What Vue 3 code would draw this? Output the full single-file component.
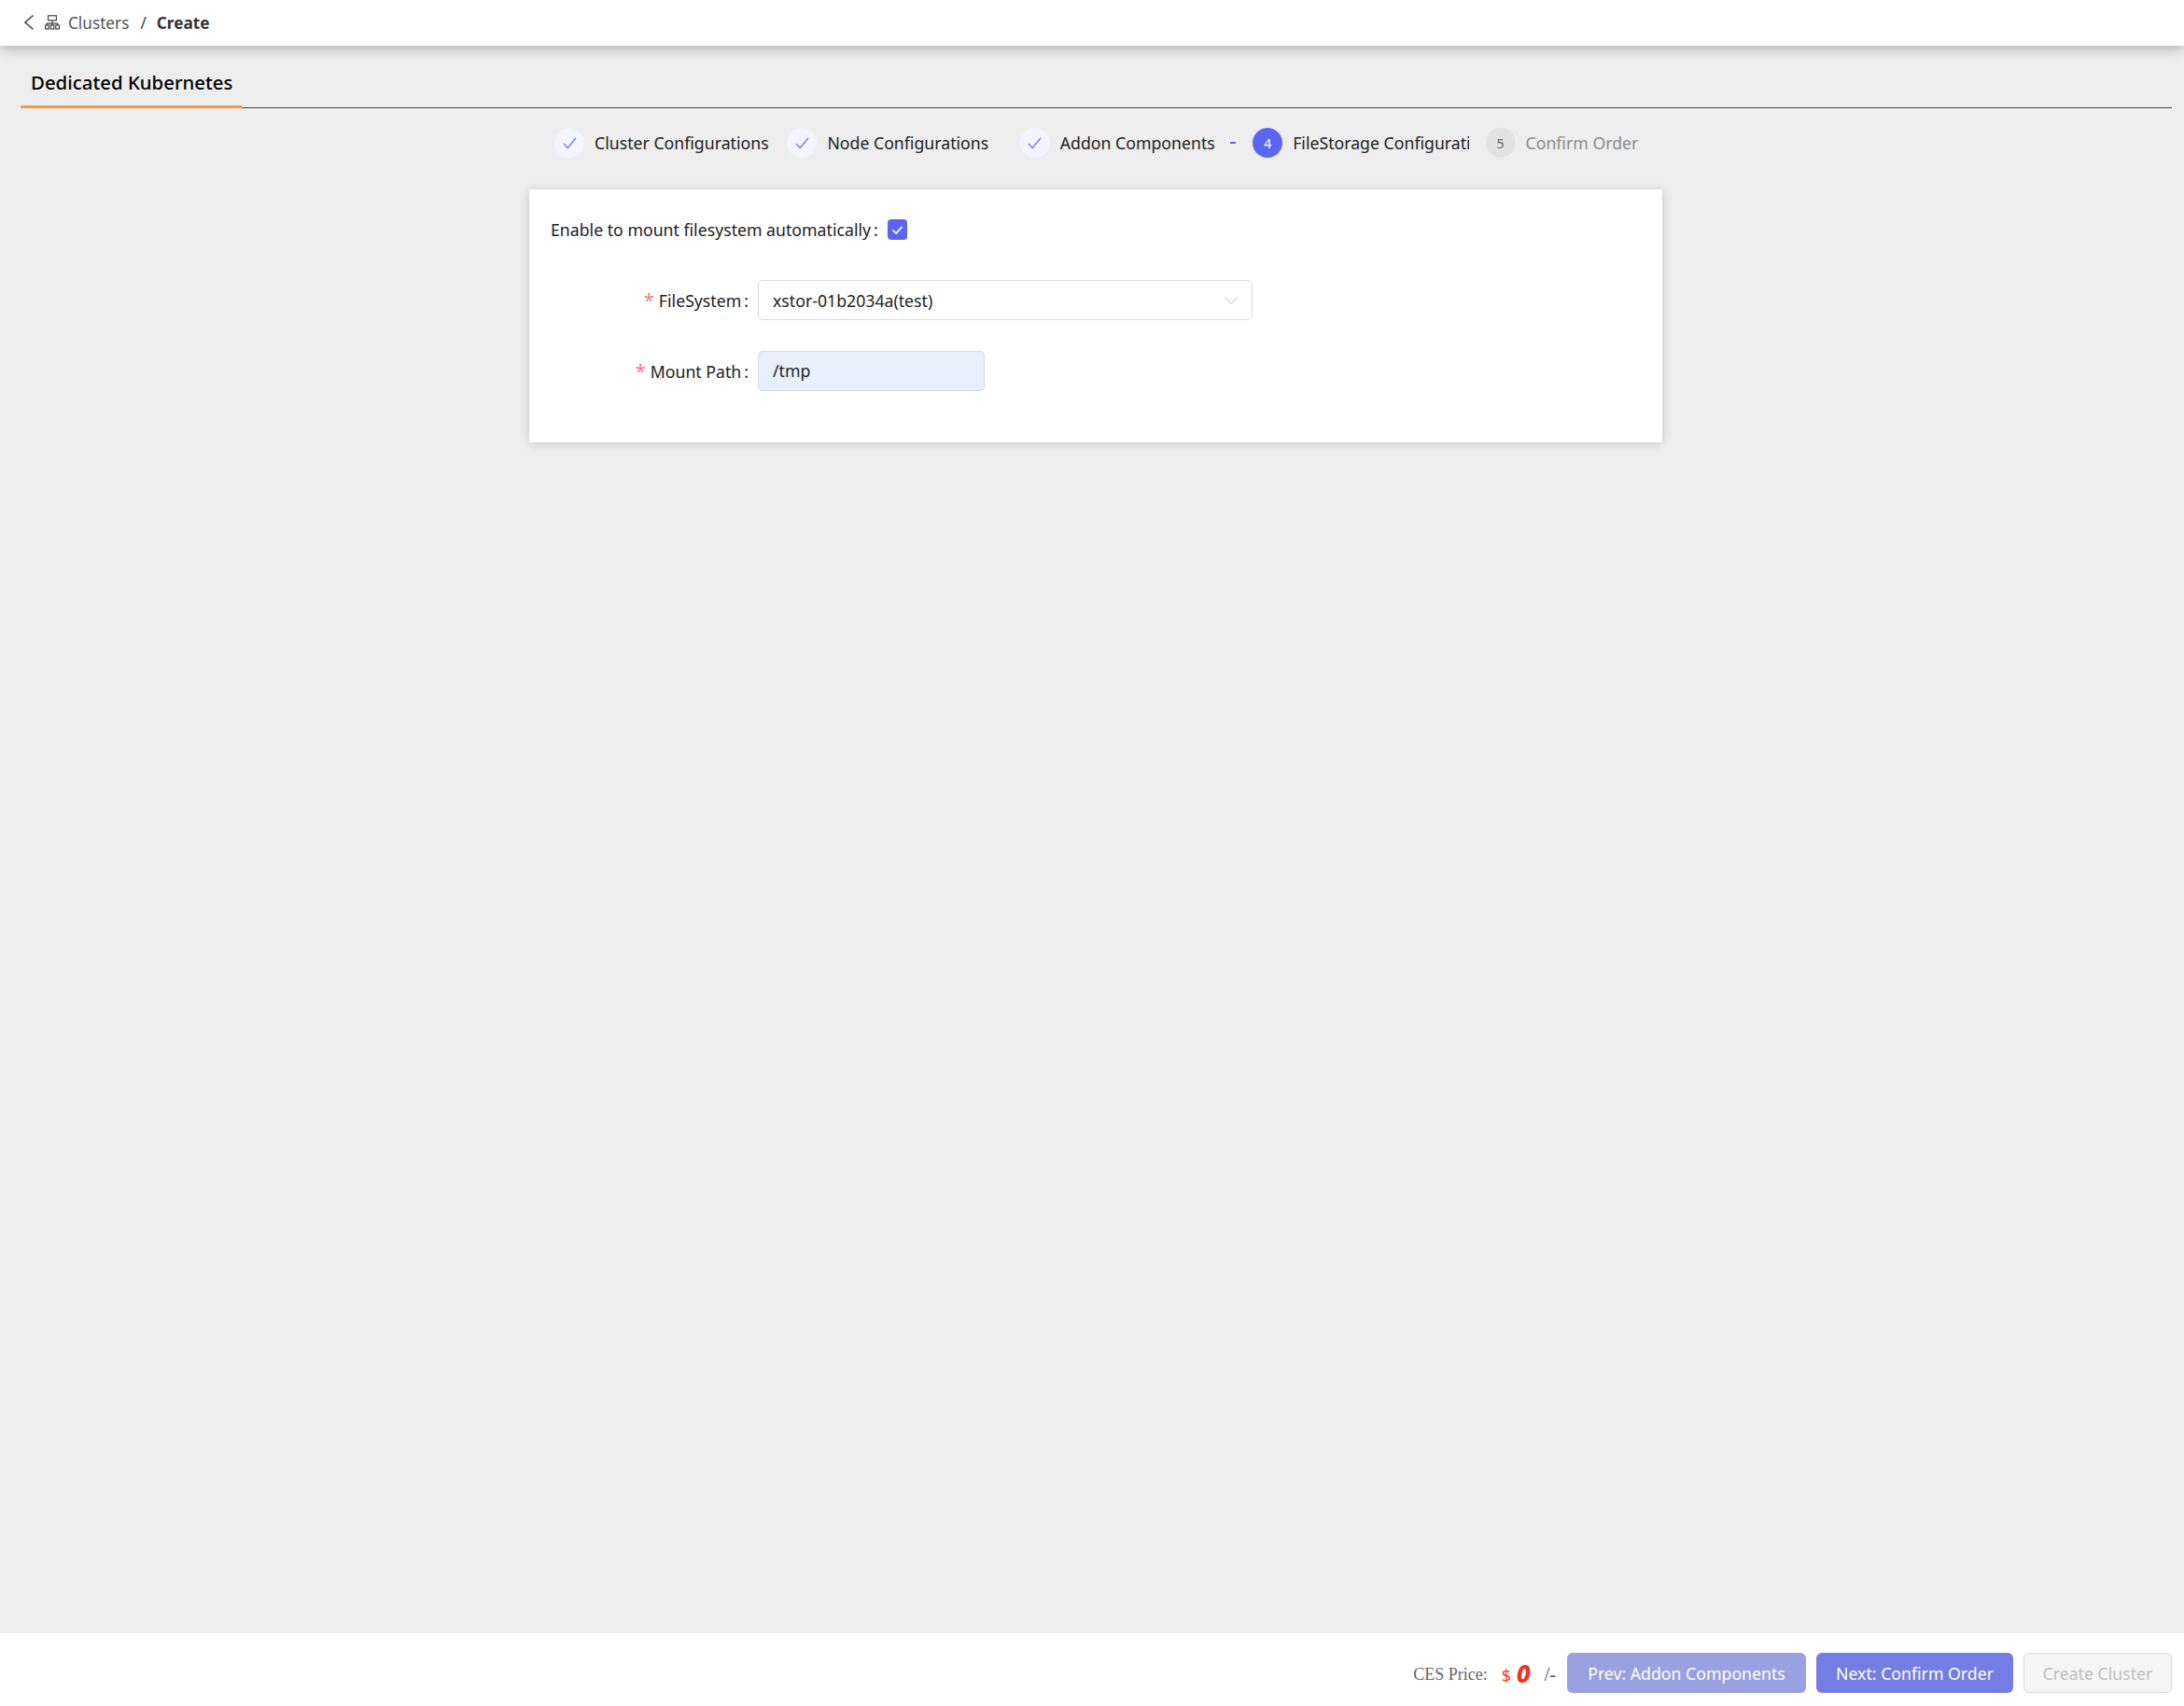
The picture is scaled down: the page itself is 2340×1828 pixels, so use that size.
<template>
  <div class="page">
    <header class="topbar">
      <svg class="back" viewBox="0 0 12 18" width="12" height="18">
        <path d="M10.5 1.5 2 9l8.5 7.5" fill="none" stroke="#444" stroke-width="1.6" />
      </svg>
      <svg class="cluster-icon" viewBox="0 0 16 16" width="16" height="16">
        <g fill="none" stroke="#444" stroke-width="1.2">
          <rect x="3.6" y="0.8" width="8.8" height="5" />
          <path d="M8 5.800v3.400M2.200 11V9.200h11.600V11M8 9.200V11" />
          <rect x="0.600" y="11" width="3.600" height="4" />
          <rect x="6.200" y="11" width="3.600" height="4" />
          <rect x="11.800" y="11" width="3.600" height="4" />
        </g>
      </svg>
      <span class="crumb">Clusters</span>
      <span class="sep">/</span>
      <span class="crumb-current">Create</span>
    </header>

    <main class="main">
      <div class="tabs">
        <div class="tab">Dedicated Kubernetes</div>
      </div>

      <div class="steps">
        <div v-for="s in steps" :key="s.label" class="step" :class="s.state">
          <span class="dot">
            <svg v-if="s.state === 'done'" viewBox="0 0 16 14" width="15" height="13">
              <path d="M1 7.500 5.500 12.500 15 1" fill="none" stroke="#5b63f5" stroke-width="1.300" />
            </svg>
            <template v-else>{{ s.num }}</template>
          </span>
          <span class="step-label">{{ s.label }}</span>
          <span v-if="s.dash" class="dash"></span>
        </div>
      </div>

      <section class="card">
        <div class="auto-row">
          <span>Enable to mount filesystem automatically</span>
          <span class="colon">:</span>
          <span class="checkbox">
            <svg viewBox="0 0 14 12" width="13" height="11">
              <path d="M1.500 6 5.500 10 12.500 2" fill="none" stroke="#fff" stroke-width="1.800" />
            </svg>
          </span>
        </div>
        <div class="field first">
          <label class="field-label"><i>*</i>FileSystem<span class="colon">:</span></label>
          <div class="select">
            <span>xstor-01b2034a(test)</span>
            <svg viewBox="0 0 14 8" width="14" height="8">
              <path d="M.5.5 7 7.500 13.500.5" fill="none" stroke="#bbb" stroke-width="1" />
            </svg>
          </div>
        </div>
        <div class="field">
          <label class="field-label"><i>*</i>Mount Path<span class="colon">:</span></label>
          <div class="input">/tmp</div>
        </div>
      </section>
    </main>

    <footer class="footer">
      <span class="price-label">CES Price:</span>
      <span class="currency">$</span>
      <span class="amount">0</span>
      <span class="unit">/-</span>
      <button class="btn prev">Prev: Addon Components</button>
      <button class="btn next">Next: Confirm Order</button>
      <button class="btn disabled">Create Cluster</button>
    </footer>
  </div>
</template>

<script setup>
const steps = [
  { label: 'Cluster Configurations', state: 'done' },
  { label: 'Node Configurations', state: 'done' },
  { label: 'Addon Components', state: 'done', dash: true },
  { label: 'FileStorage Configurati', state: 'active', num: 4 },
  { label: 'Confirm Order', state: 'todo', num: 5 },
]
</script>

<style>
html,
body {
  margin: 0;
  background: #eee;
}
</style>

<style scoped>
.page {
  display: flex;
  flex-direction: column;
  min-height: 1828px;
  font-family: "Noto Sans", "Open Sans", sans-serif;
  font-size: 17.7px;
  color: #222;
  background: #eee;
}

.topbar {
  display: flex;
  align-items: center;
  height: 49px;
  padding: 0 0 1px 25px;
  box-sizing: border-box;
  font-size: 17.2px;
  background: #fff;
  box-shadow: 0 2px 14px rgba(0, 0, 0, 0.3);
  position: relative;
}

.back {
  margin-right: 11px;
}

.cluster-icon {
  margin-right: 9px;
}

.crumb {
  color: #555;
}

.sep {
  margin: 0 11px 0 12px;
  color: #444;
}

.crumb-current {
  font-weight: 700;
  color: #333;
}

.main {
  flex: 1;
}

.tabs {
  margin: 0 13px 0 22px;
  height: 66px;
  display: flex;
  align-items: flex-end;
  border-bottom: 1px solid #444;
}

.tab {
  width: 237px;
  box-sizing: border-box;
  padding: 0 0 11px 11px;
  margin-bottom: -1px;
  font-size: 20.4px;
  font-weight: 500;
  color: #000;
  white-space: nowrap;
  border-bottom: 3px solid #f59a42;
}

.steps {
  display: flex;
  align-items: center;
  height: 33px;
  margin-top: 21px;
  padding-left: 594px;
}

.step {
  display: flex;
  align-items: center;
  flex: 0 0 249.4px;
  padding-bottom: 1px;
  box-sizing: border-box;
}

.dot {
  display: flex;
  align-items: center;
  justify-content: center;
  flex-shrink: 0;
  width: 32px;
  height: 32px;
  margin-right: 11px;
  border-radius: 50%;
  font-size: 14px;
  background: #f2f5ff;
}

.step.active .dot {
  background: #5b66f5;
  color: #fff;
}

.step.todo .dot {
  background: #e2e2e2;
  color: #666;
}

.step-label {
  white-space: nowrap;
}

.step.active .step-label {
  width: 189px;
  overflow: hidden;
}

.step.todo .step-label {
  color: #8c8c8c;
}

.dash {
  width: 6px;
  height: 2px;
  margin-left: 16px;
  background: #5b66f5;
}

.card {
  box-sizing: border-box;
  width: 1214px;
  height: 271px;
  margin: 33px 0 0 567px;
  padding: 32px 22px 0 23px;
  background: #fff;
  box-shadow: 0 1px 10px rgba(0, 0, 0, 0.18);
}

.auto-row {
  display: flex;
  align-items: center;
  height: 22px;
}

.colon {
  margin: 0 10px 0 3px;
}

.checkbox {
  display: flex;
  align-items: center;
  justify-content: center;
  width: 21px;
  height: 22px;
  border-radius: 4px;
  background: #5b63f0;
}

.field {
  display: flex;
  align-items: center;
  margin-top: 33px;
}

.field.first {
  margin-top: 43px;
}

.field-label {
  display: flex;
  justify-content: flex-end;
  align-items: center;
  width: 222px;
  white-space: nowrap;
}

.field-label i {
  margin-right: 5px;
  font-style: normal;
  font-size: 20px;
  line-height: 1;
  color: #f5787a;
}

.select,
.input {
  box-sizing: border-box;
  display: flex;
  align-items: center;
  height: 43px;
  padding: 0 15px;
  border: 1px solid #d9d9d9;
  border-radius: 5px;
}

.select {
  justify-content: space-between;
  width: 530px;
}

.input {
  width: 243px;
  padding-bottom: 2px;
  background: #e8f0fe;
}

.footer {
  display: flex;
  align-items: center;
  justify-content: flex-end;
  height: 78px;
  padding: 7px 13px 0 0;
  box-sizing: border-box;
  background: #fff;
}

.price-label {
  font-family: "Liberation Serif", serif;
  font-size: 18px;
  color: #666;
  margin-top: 4px;
}

.currency {
  font-size: 18px;
  margin: 4px 0 0 15px;
  color: #f5452c;
}

.amount {
  margin: 0 15px 0 6px;
  font-size: 26px;
  font-weight: 800;
  font-style: italic;
  color: #f5321e;
}

.unit {
  margin: 4px 12px 0 0;
  font-family: "Liberation Serif", serif;
  font-size: 20px;
  color: #555;
}

.btn {
  box-sizing: border-box;
  height: 43px;
  margin-left: 11px;
  padding: 0;
  border: 0;
  border-radius: 6px;
  font: inherit;
  color: #fff;
}

.btn.prev {
  width: 256px;
  margin-left: 0;
  background: #99a1e0;
}

.btn.next {
  width: 211px;
  background: #747de3;
}

.btn.disabled {
  width: 159px;
  border: 1px solid #d9d9d9;
  background: #f5f5f5;
  color: #bfbfbf;
}
</style>
